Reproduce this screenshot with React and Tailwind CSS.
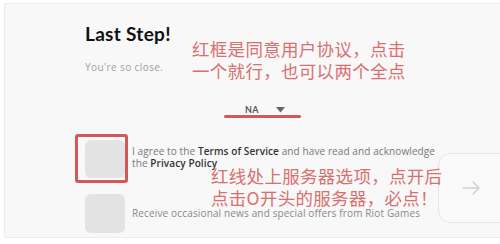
import React from "react";

export default function App() {
  const cjk = { fontFamily: '"Noto Sans CJK SC", "Noto Sans", sans-serif' };
  const body = { fontFamily: '"Open Sans", "Noto Sans", sans-serif' };
  return (
    <div className="relative w-[500px] h-[244px] overflow-hidden bg-white" style={{ fontFamily: 'Lato, "Noto Sans", sans-serif' }}>
      <div className="absolute left-[4px] top-[3px] right-0 bottom-[6px] border-l border-t border-b border-[#ececec] bg-[#f8f8f8]">
        <div className="flex flex-col pl-[80px] pt-[19px] w-[440px]">
          <h1 className="text-[19px] leading-[22px] font-bold text-[#111] tracking-[0.3px]">Last Step!</h1>
          <p className="mt-[16px] text-[10px] leading-[12px] text-[#a0a0a0] tracking-[0.4px]" style={body}>You're so close.</p>
          <div className="mt-[30px] flex justify-center">
            <div className="flex items-center gap-[17px] text-[9px] font-bold text-[#555] tracking-[0.5px]">
              <span>NA</span>
              <svg width="9" height="6" viewBox="0 0 9 6"><path d="M0 0h9L4.5 5.5z" fill="#666" /></svg>
            </div>
          </div>
          <div className="mt-[23px] flex items-start gap-[7px]">
            <div className="w-[40px] h-[38px] rounded-[6px] bg-[#e3e3e3] shrink-0" />
            <p className="mt-[5px] text-[10px] leading-[12px] text-[#777] tracking-[0.1px] w-[310px]" style={body}>
              I agree to the <b className="text-[#333] font-semibold">Terms of Service</b> and have read and acknowledge the <b className="text-[#333] font-semibold">Privacy Policy</b>
            </p>
          </div>
          <div className="mt-[16px] flex items-center gap-[7px]">
            <div className="w-[40px] h-[39px] rounded-[6px] bg-[#e3e3e3] shrink-0" />
            <p className="text-[10px] leading-[12px] text-[#888] tracking-[0.15px]" style={body}>Receive occasional news and special offers from Riot Games</p>
          </div>
        </div>
        <div className="absolute left-[433px] top-[149px] w-[80px] h-[70px] rounded-[12px] border border-[#e6e6e6] bg-[#f9f9f9] flex items-center pl-[23px]">
          <svg width="18" height="14" viewBox="0 0 18 14" fill="none" stroke="#d2d2d2" strokeWidth="1.5" strokeLinecap="round" strokeLinejoin="round">
            <path d="M1 7h16M11 1l6 6-6 6" />
          </svg>
        </div>
      </div>
      {/* annotations */}
      <div className="absolute left-[75px] top-[134px] w-[53px] h-[49px] border-[3px] border-[#d4585a] rounded-[3px]" />
      <div className="absolute left-[224px] top-[115px] w-[77px] h-[3px] rounded-full bg-[#d4585a]" />
      <div className="absolute left-[192px] top-[38px] text-[17.5px] leading-[22px] text-[#d97070] tracking-[0.3px]" style={cjk}>
        <div>红框是同意用户协议，点击</div>
        <div>一个就行，也可以两个全点</div>
      </div>
      <div className="absolute left-[211px] top-[165px] text-[17.5px] leading-[22px] text-[#d97070] tracking-[0.3px]" style={cjk}>
        <div>红线处上服务器选项，点开后</div>
        <div>点击O开头的服务器，必点！</div>
      </div>
    </div>
  );
}
